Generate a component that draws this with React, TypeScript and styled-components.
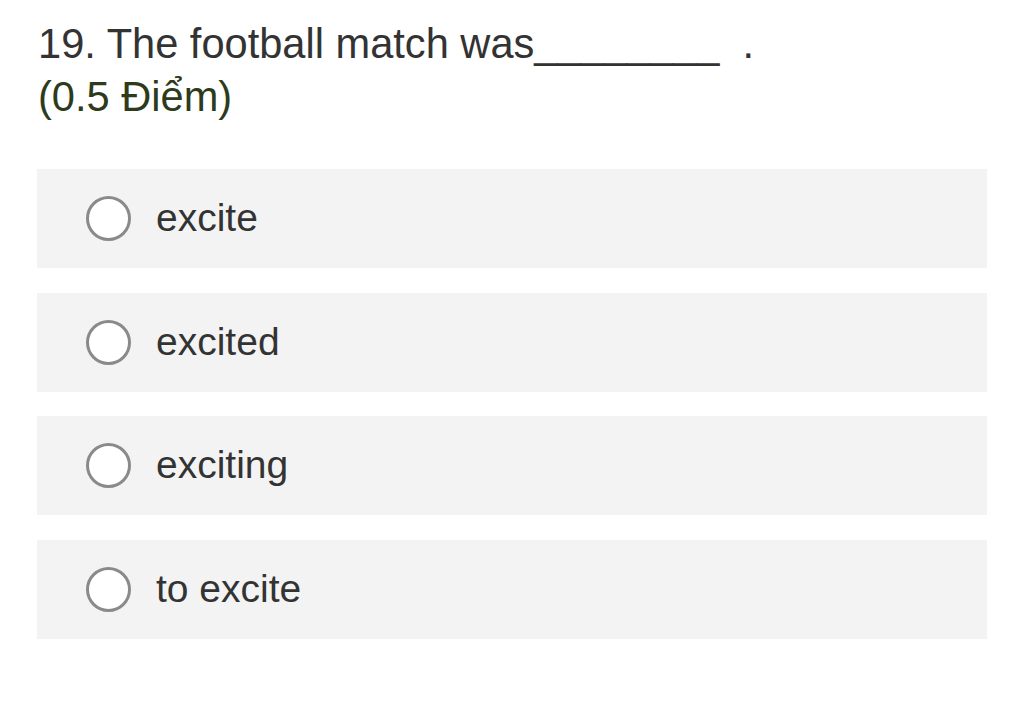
import React from "react";
import styled, { createGlobalStyle } from "styled-components";

const Global = createGlobalStyle`
  html, body { margin: 0; padding: 0; background: #ffffff; }
  body { font-family: "Liberation Sans", Arial, sans-serif; }
`;

const Page = styled.div`
  width: 1024px;
  height: 726px;
  box-sizing: border-box;
  padding: 18px 37px 0 37px;
  display: flex;
  flex-direction: column;
`;

const Title = styled.div`
  font-size: 41.6px;
  line-height: 52.5px;
  color: #333333;
  white-space: pre;
  margin-left: 1px;
`;

const Points = styled.div`
  font-size: 41.6px;
  line-height: 52.5px;
  color: #2e3a1c;
  margin-left: 1px;
`;

const Options = styled.div`
  margin-top: 46px;
  display: flex;
  flex-direction: column;
  gap: 24.5px;
  width: 950px;
`;

const Option = styled.label`
  height: 99px;
  background: #f3f3f3;
  display: flex;
  align-items: center;
  padding-left: 49px;
  gap: 25px;
  box-sizing: border-box;
`;

const Radio = styled.span`
  width: 45px;
  height: 45px;
  box-sizing: border-box;
  border-radius: 50%;
  border: 3.5px solid #8a8a8a;
  background: #ffffff;
  flex: none;
`;

const OptionText = styled.span`
  font-size: 39px;
  color: #333333;
  line-height: 1;
  margin-top: -2px;
`;

const options = ["excite", "excited", "exciting", "to excite"];

export default function App() {
  return (
    <>
      <Global />
      <Page>
        <Title>{"19. The football match was________  ."}</Title>
        <Points>(0.5 Điểm)</Points>
        <Options>
          {options.map((o) => (
            <Option key={o}>
              <Radio />
              <OptionText>{o}</OptionText>
            </Option>
          ))}
        </Options>
      </Page>
    </>
  );
}
